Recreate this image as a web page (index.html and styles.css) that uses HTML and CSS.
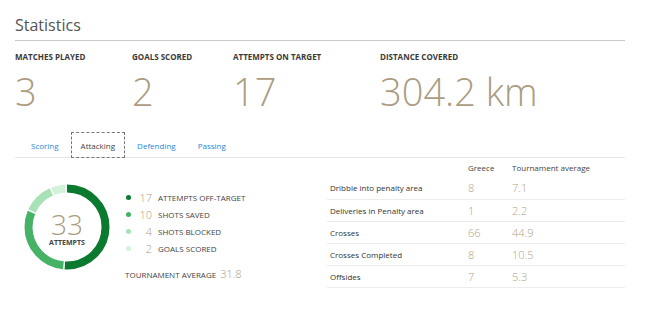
FILE: index.html
```html
<!DOCTYPE html>
<html>
<head>
<meta charset="utf-8">
<link rel="stylesheet" href="styles.css">
</head>
<body>
<div class="page">
  <h1 class="title">Statistics</h1>
  <div class="stats">
    <div class="stat"><div class="stat-label">MATCHES PLAYED</div><div class="stat-value">3</div></div>
    <div class="stat"><div class="stat-label">GOALS SCORED</div><div class="stat-value">2</div></div>
    <div class="stat"><div class="stat-label">ATTEMPTS ON TARGET</div><div class="stat-value">17</div></div>
    <div class="stat"><div class="stat-label">DISTANCE COVERED</div><div class="stat-value">304.2 km</div></div>
  </div>
  <div class="tabs">
    <span class="tab">Scoring</span>
    <span class="tab active">Attacking</span>
    <span class="tab">Defending</span>
    <span class="tab">Passing</span>
  </div>
  <div class="content">
    <div class="left">
      <div class="donut">
        <svg width="86" height="86" viewBox="0 0 86 86">
          <g transform="rotate(-90 43 43)" fill="none" stroke-width="8">
            <circle cx="43" cy="43" r="38.5" pathLength="33" stroke="#0c7a2e" stroke-dasharray="16.8 33" stroke-dashoffset="0"/>
            <circle cx="43" cy="43" r="38.5" pathLength="33" stroke="#45b266" stroke-dasharray="9.8 33" stroke-dashoffset="-17"/>
            <circle cx="43" cy="43" r="38.5" pathLength="33" stroke="#a6e2b6" stroke-dasharray="3.8 33" stroke-dashoffset="-27"/>
            <circle cx="43" cy="43" r="38.5" pathLength="33" stroke="#d2f2da" stroke-dasharray="1.8 33" stroke-dashoffset="-31"/>
          </g>
        </svg>
        <div class="donut-center">
          <div class="donut-num">33</div>
          <div class="donut-label">ATTEMPTS</div>
        </div>
      </div>
      <div class="legend">
        <div class="legend-row"><span class="dot d1"></span><span class="legend-num">17</span><span class="legend-text">ATTEMPTS OFF-TARGET</span></div>
        <div class="legend-row"><span class="dot d2"></span><span class="legend-num">10</span><span class="legend-text">SHOTS SAVED</span></div>
        <div class="legend-row"><span class="dot d3"></span><span class="legend-num">4</span><span class="legend-text">SHOTS BLOCKED</span></div>
        <div class="legend-row"><span class="dot d4"></span><span class="legend-num">2</span><span class="legend-text">GOALS SCORED</span></div>
        <div class="avg"><span class="avg-label">TOURNAMENT AVERAGE</span><span class="avg-num">31.8</span></div>
      </div>
    </div>
    <table class="table">
      <thead>
        <tr><th></th><th>Greece</th><th>Tournament average</th></tr>
      </thead>
      <tbody>
        <tr><td>Dribble into penalty area</td><td class="v">8</td><td class="v">7.1</td></tr>
        <tr><td>Deliveries in Penalty area</td><td class="v">1</td><td class="v">2.2</td></tr>
        <tr><td>Crosses</td><td class="v">66</td><td class="v">44.9</td></tr>
        <tr><td>Crosses Completed</td><td class="v">8</td><td class="v">10.5</td></tr>
        <tr><td>Offsides</td><td class="v">7</td><td class="v">5.3</td></tr>
      </tbody>
    </table>
  </div>
</div>
</body>
</html>
```
FILE: styles.css
```css
* { box-sizing: border-box; }
html, body { margin: 0; padding: 0; background: #fff; }
body { font-family: "Open Sans", "Liberation Sans", sans-serif; color: #444; }
.page { width: 625px; padding: 0 0 0 15px; }
.title {
  margin: 0;
  padding-top: 14px;
  padding-bottom: 3px;
  font-size: 16px;
  line-height: 23px;
  font-weight: 400;
  color: #555;
  border-bottom: 1px solid #c9c9c9;
}
.stats {
  display: grid;
  grid-template-columns: 117px 101px 147px auto;
  padding-top: 10px;
}
.stat-label {
  font-size: 8px;
  line-height: 11px;
  font-weight: 700;
  color: #3a3a3a;
}
.stat-value {
  margin-top: 10px;
  font-size: 38px;
  line-height: 38px;
  font-weight: 300;
  color: #ab9c7f;
}
.tabs {
  display: flex;
  margin-top: 22px;
  padding-left: 6px;
  border-bottom: 1px solid #e6e6e6;
  height: 26px;
}
.tab {
  display: flex;
  align-items: center;
  padding: 0 9px;
  font-size: 8px;
  color: #2a86d6;
  height: 26px;
  margin-right: 2px;
  border: 1px solid transparent;
}
.tab.active {
  color: #444;
  border: 1px dashed #777;
}
.content {
  display: flex;
}
.left {
  width: 312px;
  display: flex;
  padding-left: 9px;
}
.donut {
  position: relative;
  width: 86px;
  height: 86px;
  margin-top: 26px;
}
.donut svg { display: block; }
.donut-center {
  position: absolute;
  left: 0; top: 0; right: 0; bottom: 0;
  display: flex;
  flex-direction: column;
  align-items: center;
  padding-top: 28px;
}
.donut-num {
  font-size: 28px;
  line-height: 24px;
  font-weight: 300;
  color: #ab9c7f;
}
.donut-label {
  margin-top: 2px;
  font-size: 7px;
  line-height: 9px;
  font-weight: 700;
  color: #444;
}
.legend {
  margin-left: 15px;
  padding-top: 31px;
}
.legend-row {
  display: flex;
  align-items: center;
  height: 17px;
}
.dot {
  width: 5px;
  height: 5px;
  border-radius: 50%;
  margin-left: 1px;
}
.d1 { background: #0c7a2e; }
.d2 { background: #45b266; }
.d3 { background: #a6e2b6; }
.d4 { background: #d2f2da; }
.legend-num {
  width: 21px;
  text-align: right;
  font-size: 11px;
  font-weight: 300;
  color: #ab9c7f;
}
.legend-text {
  margin-left: 6px;
  font-size: 8px;
  color: #444;
}
.avg {
  display: flex;
  align-items: baseline;
  margin-top: 9px;
}
.avg-label { font-size: 8px; color: #444; }
.avg-num { margin-left: 4px; font-size: 11px; font-weight: 300; color: #ab9c7f; }
.table {
  width: 298px;
  border-collapse: collapse;
  font-size: 8px;
}
.table th {
  height: 19px;
  font-weight: 400;
  text-align: left;
  color: #444;
  padding: 0;
}
.table th:first-child { width: 141px; }
.table th:nth-child(2) { width: 44px; }
.table td {
  height: 22px;
  padding: 0;
  border-bottom: 1px solid #ececec;
  color: #333;
}
.table td:first-child { padding-left: 3px; }
.table td.v {
  font-size: 11px;
  font-weight: 300;
  color: #b0a388;
}
```
